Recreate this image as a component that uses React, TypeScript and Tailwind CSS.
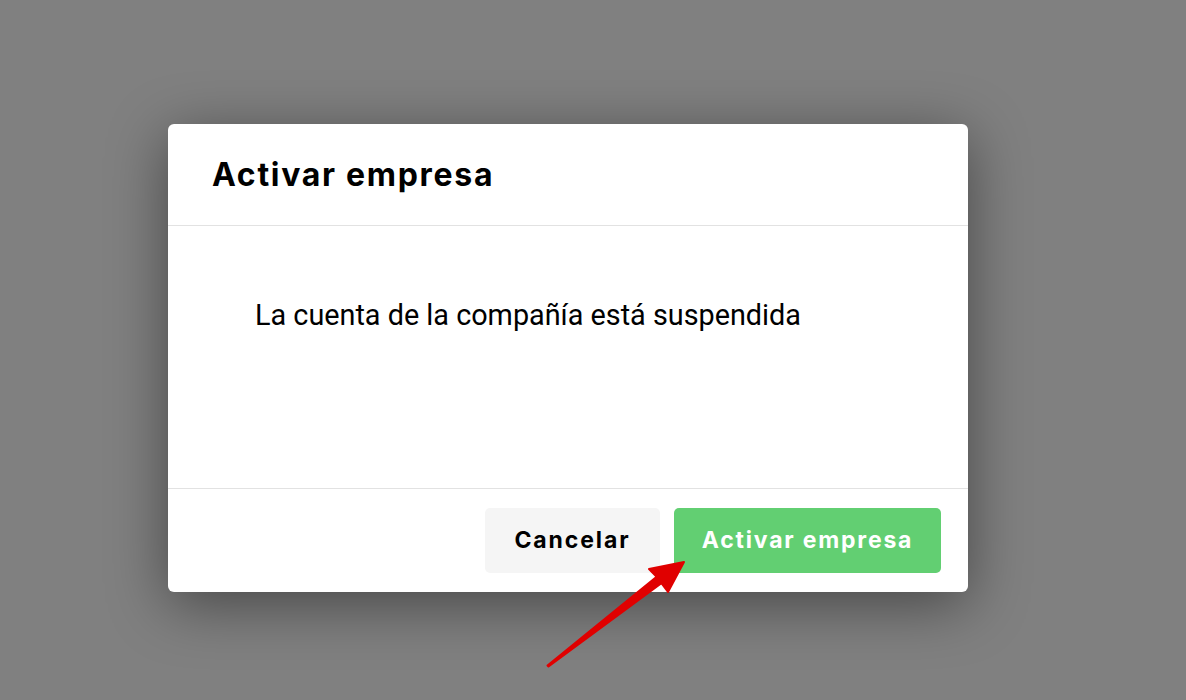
export default function App() {
  return (
    <div className="relative h-[700px] w-[1186px] overflow-hidden bg-[#808080] pl-[168px] pt-[124px]">
      <div className="w-[800px] rounded-[6px] bg-white shadow-[0_12px_60px_rgba(0,0,0,0.45)]">
        {/* header */}
        <div className="flex h-[102px] items-center border-b border-[#e2e2e2] px-[44px]">
          <h2 className="font-['Inter',sans-serif] text-[32px] font-bold tracking-[1.7px] text-black">
            Activar empresa
          </h2>
        </div>

        {/* body */}
        <div className="h-[262px] pl-[87px] pt-[68px]">
          <p className="font-['Roboto',sans-serif] text-[28.8px] text-black">
            La cuenta de la compañía está suspendida
          </p>
        </div>

        {/* footer */}
        <div className="flex justify-end gap-[14px] border-t border-[#e2e2e2] pb-[19px] pl-4 pr-[27px] pt-[19px]">
          <button className="h-[65px] w-[175px] rounded-[5px] bg-[#f5f5f5] font-['Inter',sans-serif] text-[23px] font-bold tracking-[1.9px] text-black">
            Cancelar
          </button>
          <button className="h-[65px] w-[267px] rounded-[5px] bg-[#62cf72] font-['Inter',sans-serif] text-[23px] font-bold tracking-[1.8px] text-white">
            Activar empresa
          </button>
        </div>
      </div>

      {/* annotation arrow */}
      <svg className="absolute left-0 top-0" width="1186" height="700" viewBox="0 0 1186 700">
        <path
          d="M547.5 665.5 L656.6 576.8 L649 569 L684 562 L668 592 L661.4 583.2 L548.5 666.5 Z"
          fill="#e00000"
          stroke="#e00000"
          strokeWidth="2"
          strokeLinejoin="round"
        />
      </svg>
    </div>
  )
}
